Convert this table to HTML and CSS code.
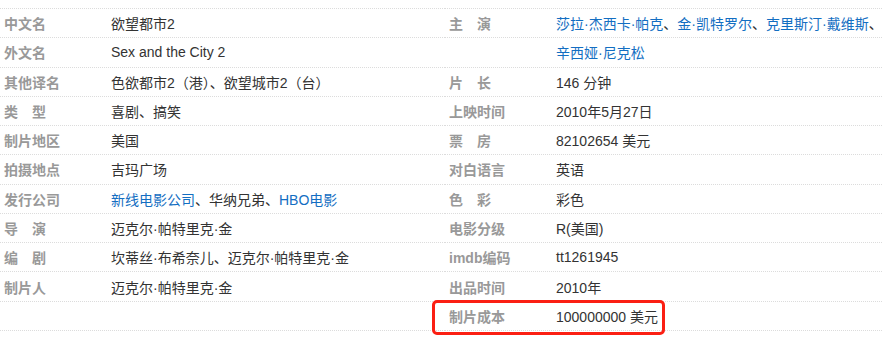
FILE: index.html
```html
<!DOCTYPE html>
<html lang="zh">
<head>
<meta charset="utf-8">
<link rel="stylesheet" href="styles.css">
</head>
<body>
<div class="info">
  <dl class="col col-left">
    <div class="row"><dt>中文名</dt><dd>欲望都市2</dd></div>
    <div class="row"><dt>外文名</dt><dd>Sex and the City 2</dd></div>
    <div class="row"><dt>其他译名</dt><dd>色欲都市2（港）、欲望城市2（台）</dd></div>
    <div class="row"><dt>类　型</dt><dd>喜剧、搞笑</dd></div>
    <div class="row"><dt>制片地区</dt><dd>美国</dd></div>
    <div class="row"><dt>拍摄地点</dt><dd>吉玛广场</dd></div>
    <div class="row"><dt>发行公司</dt><dd><a class="link">新线电影公司</a>、华纳兄弟、<a class="link">HBO电影</a></dd></div>
    <div class="row"><dt>导　演</dt><dd>迈克尔·帕特里克·金</dd></div>
    <div class="row"><dt>编　剧</dt><dd>坎蒂丝·布希奈儿、迈克尔·帕特里克·金</dd></div>
    <div class="row"><dt>制片人</dt><dd>迈克尔·帕特里克·金</dd></div>
    <div class="row"><dt></dt><dd></dd></div>
  </dl>
  <dl class="col col-right">
    <div class="row"><dt>主　演</dt><dd><a class="link">莎拉·杰西卡·帕克</a>、<a class="link">金·凯特罗尔</a>、<a class="link">克里斯汀·戴维斯</a>、</dd></div>
    <div class="row"><dt></dt><dd><a class="link">辛西娅·尼克松</a></dd></div>
    <div class="row"><dt>片　长</dt><dd>146 分钟</dd></div>
    <div class="row"><dt>上映时间</dt><dd>2010年5月27日</dd></div>
    <div class="row"><dt>票　房</dt><dd>82102654 美元</dd></div>
    <div class="row"><dt>对白语言</dt><dd>英语</dd></div>
    <div class="row"><dt>色　彩</dt><dd>彩色</dd></div>
    <div class="row"><dt>电影分级</dt><dd>R(美国)</dd></div>
    <div class="row"><dt>imdb编码</dt><dd>tt1261945</dd></div>
    <div class="row"><dt>出品时间</dt><dd>2010年</dd></div>
    <div class="row row-marked"><dt>制片成本</dt><dd>100000000 美元</dd><span class="mark"></span></div>
  </dl>
</div>
</body>
</html>
```
FILE: styles.css
```css
html, body {
  margin: 0;
  padding: 0;
  background: #fff;
}
body {
  font-family: "Liberation Sans", "Noto Sans CJK SC", sans-serif;
  font-size: 14px;
  color: #333;
  min-height: 355px;
}
.info {
  display: grid;
  grid-template-columns: 445px 437px;
  margin-top: 8px;
  padding-bottom: 16px;
}
.col {
  margin: 0;
  padding: 0;
  border-top: 1px dotted #dcdcdc;
}
.row {
  position: relative;
  display: flex;
  align-items: center;
  height: 29.27px;
  box-sizing: border-box;
  border-bottom: 1px dotted #dcdcdc;
  padding-left: 4px;
}
dt {
  width: 107px;
  flex: none;
  margin: 0;
  color: #999;
  font-weight: bold;
  white-space: nowrap;
}
dd {
  margin: 0;
  white-space: nowrap;
}
.link {
  color: #136ec2;
  text-decoration: none;
}
.mark {
  position: absolute;
  left: -13px;
  top: -2px;
  width: 233px;
  height: 35px;
  box-sizing: border-box;
  border: 3px solid #fb1f13;
  border-radius: 5px;
}
```
